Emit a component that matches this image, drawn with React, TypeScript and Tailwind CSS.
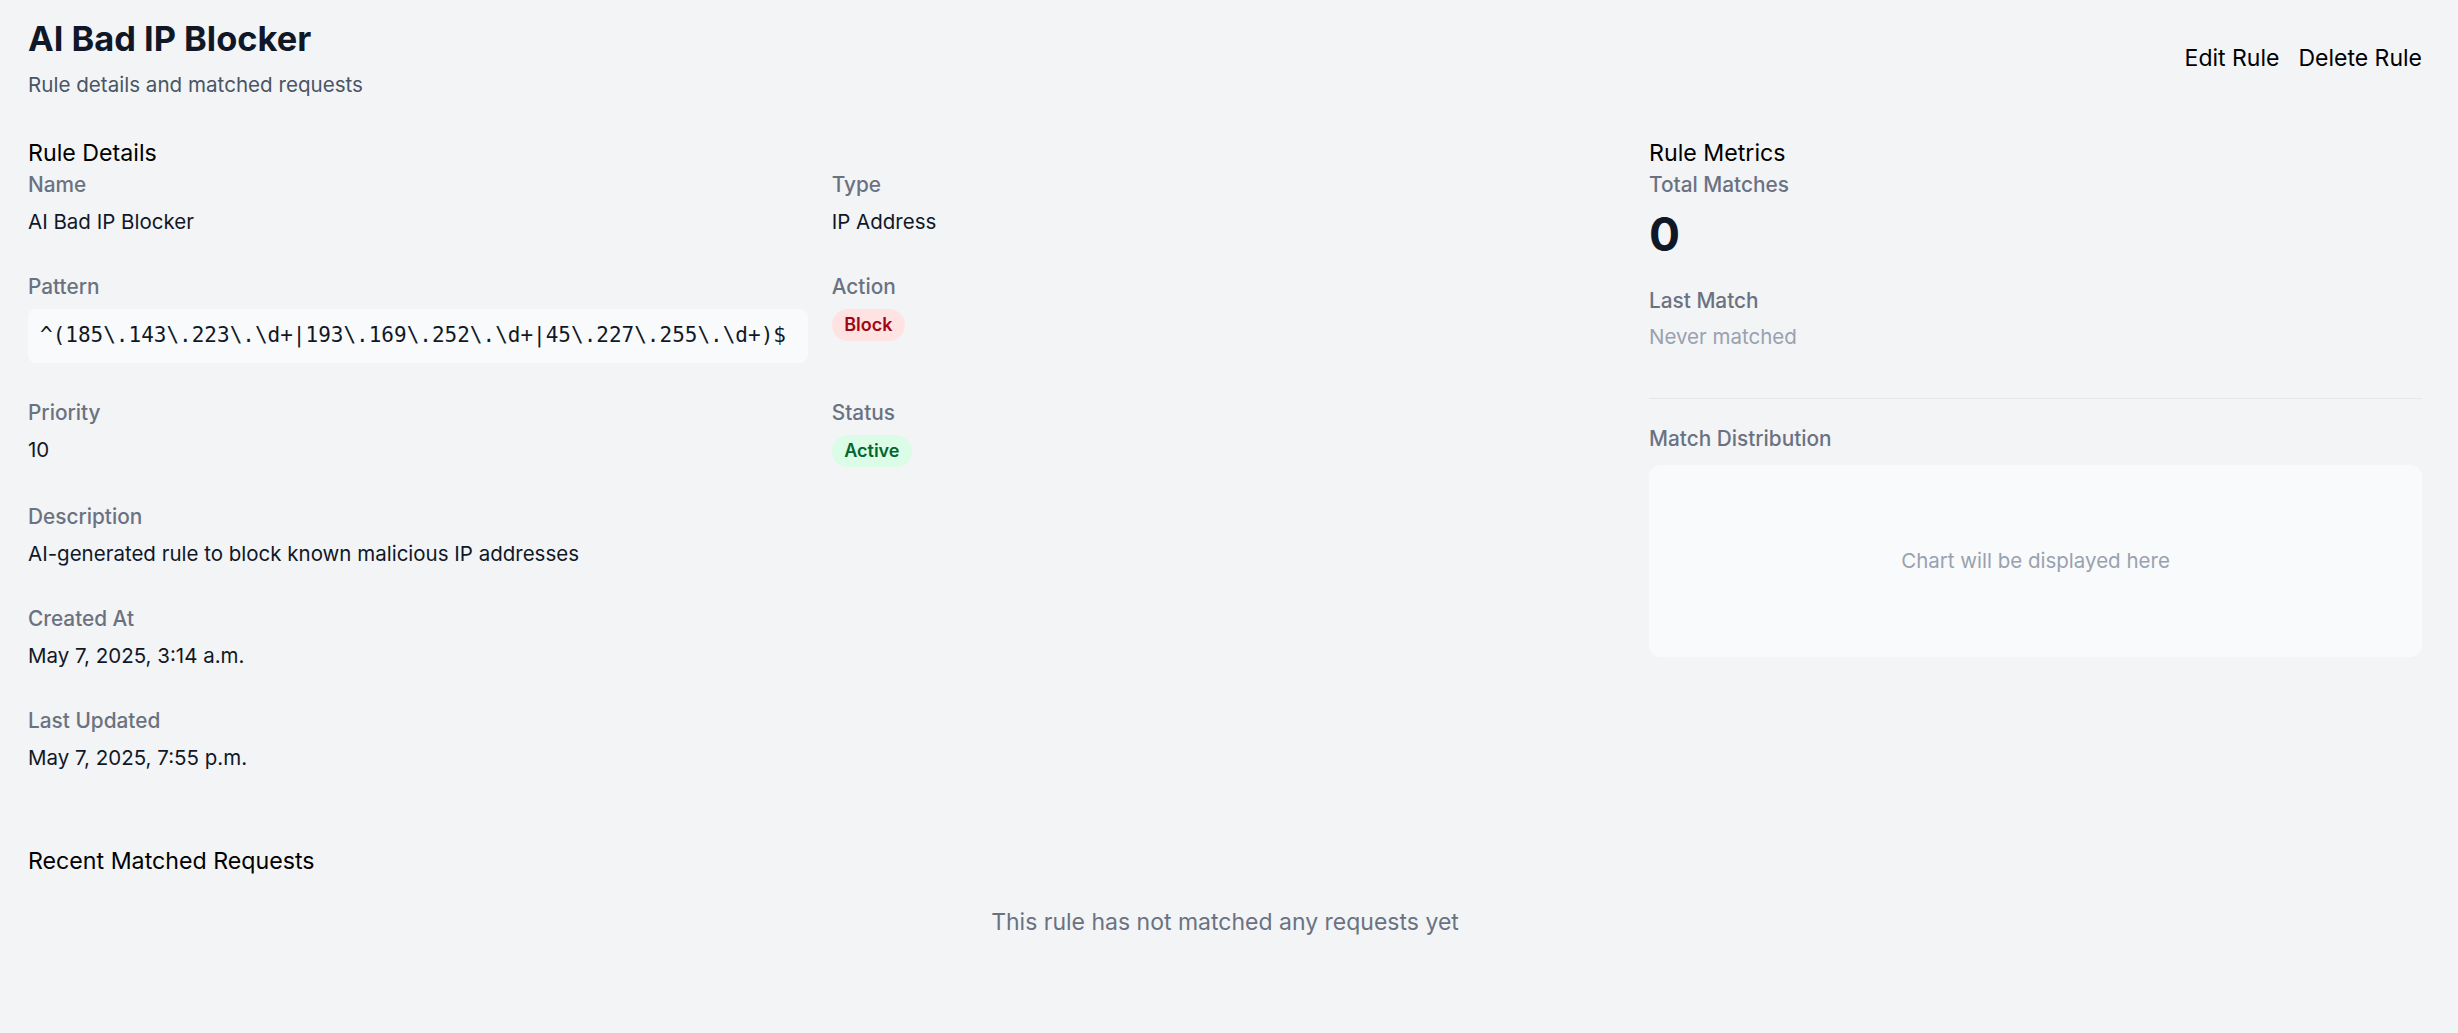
import React from "react";

type Field = {
  label: string;
  value: React.ReactNode;
  wide?: boolean;
};

function Badge({ tone, children }: { tone: "red" | "green"; children: React.ReactNode }) {
  const cls =
    tone === "red" ? "bg-red-100 text-red-800" : "bg-green-100 text-green-800";
  return (
    <span
      className={`inline-block rounded-full px-[12.5px] py-[4px] text-[18px] leading-[24px] font-semibold ${cls}`}
    >
      {children}
    </span>
  );
}

const fields: Field[] = [
  { label: "Name", value: "AI Bad IP Blocker" },
  { label: "Type", value: "IP Address" },
  {
    label: "Pattern",
    value: (
      <code className="block rounded-[8px] bg-gray-50 px-[12px] py-[12px] font-['DejaVu_Sans_Mono',monospace] text-[21px] leading-[29.5px] text-gray-900">
        {"^(185\\.143\\.223\\.\\d+|193\\.169\\.252\\.\\d+|45\\.227\\.255\\.\\d+)$"}
      </code>
    ),
  },
  { label: "Action", value: <Badge tone="red">Block</Badge> },
  { label: "Priority", value: "10" },
  { label: "Status", value: <Badge tone="green">Active</Badge> },
  { label: "Description", value: "AI-generated rule to block known malicious IP addresses", wide: true },
  { label: "Created At", value: "May 7, 2025, 3:14 a.m.", wide: true },
  { label: "Last Updated", value: "May 7, 2025, 7:55 p.m.", wide: true },
];

export default function App() {
  return (
    <div className="min-h-screen bg-gray-100 pt-[19px] pr-[36px] pl-[28px] font-['Inter','Noto_Sans',sans-serif] text-gray-900">
      <header className="flex items-start justify-between">
        <div>
          <h1 className="text-[34.4px] leading-[40px] font-bold text-gray-900">AI Bad IP Blocker</h1>
          <p className="mt-[11.5px] text-[20.6px] leading-[28px] text-gray-600">
            Rule details and matched requests
          </p>
        </div>
        <div className="mt-[22.5px] flex gap-[19px] text-[23px] leading-[32px] text-black">
          <button type="button">Edit Rule</button>
          <button type="button">Delete Rule</button>
        </div>
      </header>

      <div className="mt-[39.5px] grid grid-cols-3 gap-x-[37.5px]">
        <section className="col-span-2">
          <h2 className="text-[23.2px] leading-[30px] text-black">Rule Details</h2>
          <dl className="mt-[3px] grid grid-cols-2 gap-x-[24px] gap-y-[36px]">
            {fields.map((f) => (
              <div key={f.label} className={f.wide ? "col-span-2" : ""}>
                <dt className="text-[20.8px] leading-[28px] font-medium text-gray-500">{f.label}</dt>
                <dd className="mt-[8px] flex text-[20.5px] leading-[30px] text-gray-900">
                  {typeof f.value === "string" ? <span>{f.value}</span> : <div className="w-full">{f.value}</div>}
                </dd>
              </div>
            ))}
          </dl>
        </section>

        <section>
          <h2 className="text-[23.2px] leading-[30px] text-black">Rule Metrics</h2>
          <div className="mt-[3px]">
            <div className="text-[20.8px] leading-[28px] font-medium text-gray-500">Total Matches</div>
            <div className="mt-[9px] text-[46px] leading-[52px] font-bold text-gray-900">0</div>
          </div>
          <div className="mt-[26.5px]">
            <div className="text-[20.8px] leading-[28px] font-medium text-gray-500">Last Match</div>
            <div className="mt-[8.5px] text-[20.5px] leading-[28px] text-gray-400">Never matched</div>
          </div>
          <div className="mt-[47px] border-t border-gray-200 pt-[26px]">
            <div className="text-[20.8px] leading-[28px] font-medium text-gray-500">Match Distribution</div>
            <div className="mt-[11.5px] flex h-[192px] items-center justify-center rounded-[12px] bg-gray-50 text-[20.5px] leading-[28px] text-gray-400">
              Chart will be displayed here
            </div>
          </div>
        </section>
      </div>

      <section className="mt-[73.5px]">
        <h2 className="text-[23.2px] leading-[30px] text-black">Recent Matched Requests</h2>
        <p className="mt-[29.5px] text-center text-[23px] leading-[32px] text-gray-500">
          This rule has not matched any requests yet
        </p>
      </section>
    </div>
  );
}
